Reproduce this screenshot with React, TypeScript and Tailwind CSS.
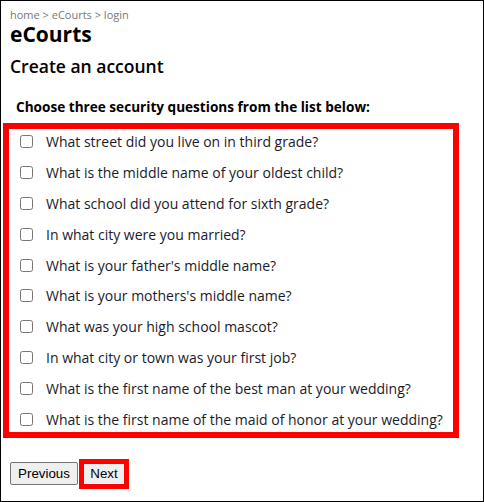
const questions = [
  'What street did you live on in third grade?',
  'What is the middle name of your oldest child?',
  'What school did you attend for sixth grade?',
  'In what city were you married?',
  "What is your father's middle name?",
  "What is your mothers's middle name?",
  'What was your high school mascot?',
  'In what city or town was your first job?',
  'What is the first name of the best man at your wedding?',
  'What is the first name of the maid of honor at your wedding?',
]

export default function App() {
  return (
    <div className="w-[484px] h-[502px] border border-black bg-white text-black font-['Open_Sans',sans-serif] overflow-hidden">
      <div className="pl-[9px] pt-[6px]">
        <div className="text-[11px] leading-[16px] text-[#777]">home &gt; eCourts &gt; login</div>
        <h1 className="text-[21px] leading-[22px] font-bold">eCourts</h1>
        <h2 className="mt-[9px] text-[17.5px] leading-[24px] font-semibold">Create an account</h2>
      </div>
      <div className="mt-[19px] pl-[15px] text-[13.6px] leading-[20px] font-bold">
        Choose three security questions from the list below:
      </div>
      <div className="ml-[2px] mt-[6px] w-[456px] h-[315px] border-[6px] border-[#ff0000] flex flex-col gap-[6px]">
        {questions.map((q) => (
          <label key={q} className="flex items-center h-[25px] pl-[11px]">
            <input type="checkbox" className="w-[13px] h-[13px] m-0 mr-[13px]" />
            <span className="text-[14px] text-[#1a1a2a]">{q}</span>
          </label>
        ))}
      </div>
      <div className="flex items-center mt-[21px] pl-[9px] font-['Liberation_Sans',sans-serif] text-[13.33px]">
        <button className="h-[23px] w-[68px] border border-[#767676] rounded-[2px] bg-[#efefef]">Previous</button>
        <div className="ml-[1px] border-[5px] border-[#ff0000]">
          <button className="h-[19px] w-[40px] bg-[#efefef]">Next</button>
        </div>
      </div>
    </div>
  )
}
